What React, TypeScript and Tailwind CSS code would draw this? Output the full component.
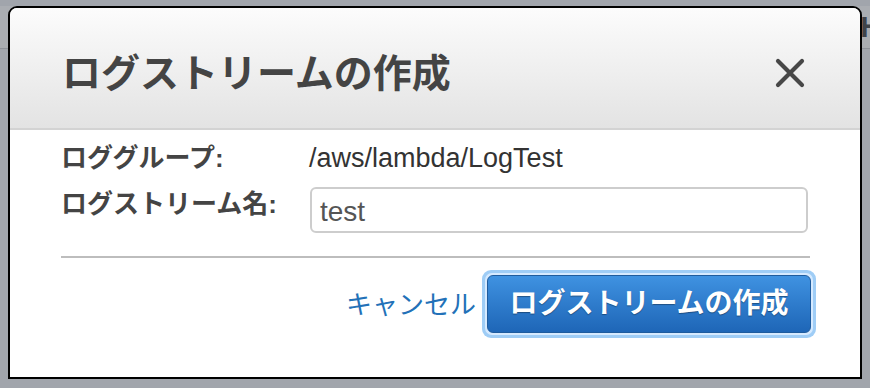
import React from 'react';

function CloseIcon() {
  return (
    <svg width="30" height="30" viewBox="0 0 30 30" aria-hidden="true">
      <path d="M3 3 L27 27 M27 3 L3 27" stroke="#474747" strokeWidth="4.2" strokeLinecap="round" />
    </svg>
  );
}

export default function App() {
  return (
    <div className="relative h-[388px] w-[870px] overflow-hidden bg-[#a1a5ac] font-['Liberation_Sans','Noto_Sans_CJK_JP',sans-serif]">
      {/* dimmed page behind the dialog */}
      <div className="mt-[6px] flex h-[43px] items-center justify-end border-b border-[#8e9299] bg-[#aaadb2]">
        <span className="mr-[-12px] text-[30px] font-bold leading-none text-[#3f434a]">H</span>
      </div>

      <div className="absolute left-[8px] top-[6px] flex h-[373px] w-[854px] flex-col overflow-hidden rounded-t-[9px] border-2 border-black bg-white">
        <div className="flex h-[122px] shrink-0 items-center justify-between border-b-2 border-[#d3d3d3] bg-gradient-to-b from-[#fcfcfc] to-[#e3e3e3] pl-[52px] pr-[55px] pt-[10px]">
          <h2 className="text-[39px] font-bold leading-none text-[#444]">ログストリームの作成</h2>
          <CloseIcon />
        </div>

        <div className="flex flex-col px-[51px]">
          <div className="mt-[12px] grid h-[32px] grid-cols-[248px_1fr] items-center">
            <span className="text-[26px] font-bold leading-none text-[#444]">ロググループ:</span>
            <span className="text-[27px] leading-none text-[#333]">/aws/lambda/LogTest</span>
          </div>
          <div className="mt-[13px] grid grid-cols-[249px_498px] items-start">
            <span className="pt-[4px] text-[26px] font-bold leading-none text-[#444]">ログストリーム名:</span>
            <div className="flex h-[46px] items-center rounded-[6px] border-2 border-[#cdcdcd] bg-white px-[8px] pt-[3px] text-[28px] text-[#555]">
              test
            </div>
          </div>
          <div className="mt-[23px] h-[2px] w-[749px] bg-[#bdbdbd]" />
          <div className="mt-[12px] flex w-[755px] items-center justify-end gap-[6px]">
            <a className="pt-[3px] text-[26px] text-[#2271b8]">キャンセル</a>
            <div className="rounded-[9px] bg-[#9fcdf6] p-[3px]">
              <div className="rounded-[7px] bg-[#d6eaff] p-[2px]">
                <button className="flex h-[58px] w-[324px] items-center justify-center rounded-[6px] border border-[#1f5c9e] bg-gradient-to-b from-[#3f92e1] to-[#1e66b7] text-[28px] font-bold text-white [text-shadow:0_1px_1px_rgba(0,0,0,0.35)]">
                  ログストリームの作成
                </button>
              </div>
            </div>
          </div>
        </div>
      </div>
    </div>
  );
}
